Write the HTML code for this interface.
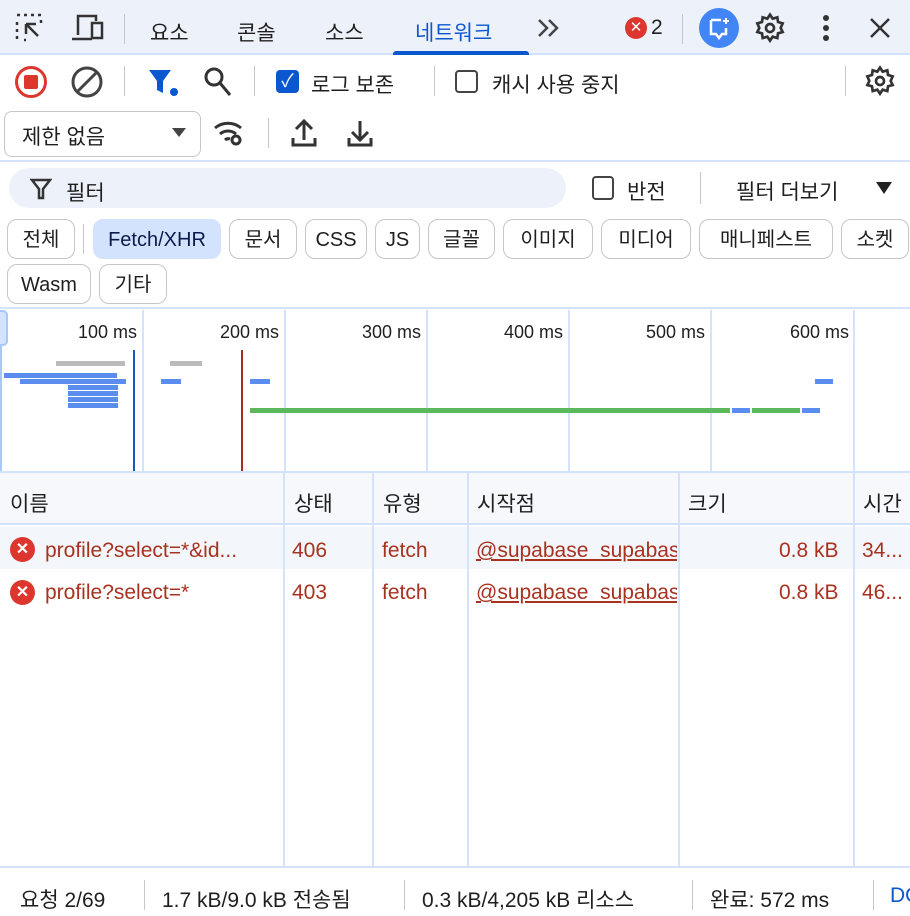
<!DOCTYPE html>
<html><head><meta charset="utf-8"><style>
*{margin:0;padding:0;box-sizing:border-box}
html,body{width:910px;height:916px;overflow:hidden}
body{background:#fff;font-family:"Liberation Sans","Noto Sans CJK KR",sans-serif;font-size:21px;color:#1f1f1f;position:relative}
.a{position:absolute;white-space:nowrap}
.vl{position:absolute;width:1px;background:#c4c7c5}
.chip{position:absolute;height:40px;border:1.5px solid #c4c7c5;border-radius:10px;line-height:40px;text-align:center;font-size:20px}
.cl{position:absolute;width:2px;background:#d3e3fd}
.bar{position:absolute;height:5px}
.red{color:#a8321f}
.ms{position:absolute;font-size:18px;top:322px;text-align:right;width:100px}
</style></head><body>
<div class="a" style="left:0;top:0;width:910px;height:55px;background:#edf2fa;border-bottom:2px solid #d3e3fd"></div>
<svg class="a" style="left:14px;top:12px" width="34" height="32" viewBox="0 0 34 32" fill="none" stroke="#333" stroke-width="2.5"><path d="M3 3h3M10 3h3M17 3h3M24 3h3M3 10v3M3 17v3M3 24v3M10 28h2M27 8v3"/><path d="M12 12l12 12M12 12v10M12 12h10"/></svg>
<svg class="a" style="left:70px;top:13px" width="36" height="30" viewBox="0 0 36 30" fill="none" stroke="#333" stroke-width="2.5"><path d="M8 22V3h18v5"/><path d="M2 26h20"/><rect x="22" y="10" width="10" height="15"/></svg>
<div class="vl" style="left:124px;top:14px;height:30px"></div>
<div class="a" style="left:150px;top:17px">요소</div>
<div class="a" style="left:237px;top:17px">콘솔</div>
<div class="a" style="left:325px;top:17px">소스</div>
<div class="a" style="left:415px;top:17px;color:#0b57d0">네트워크</div>
<div class="a" style="left:393px;top:51px;width:136px;height:4px;background:#0b57d0;border-radius:3px 3px 0 0"></div>
<svg class="a" style="left:536px;top:18px" width="26" height="20" viewBox="0 0 26 20" fill="none" stroke="#444" stroke-width="2.5"><path d="M3 2l8 8-8 8M13 2l8 8-8 8"/></svg>
<div class="a" style="left:625px;top:17px;width:22px;height:22px;border-radius:50%;background:#dc362e;color:#fff;font-size:15px;line-height:22px;text-align:center">✕</div>
<div class="a" style="left:651px;top:16px">2</div>
<div class="vl" style="left:682px;top:14px;height:30px"></div>
<div class="a" style="left:699px;top:8px;width:40px;height:40px;border-radius:50%;background:#4285f4"></div>
<svg class="a" style="left:707px;top:16px" width="24" height="26" viewBox="0 0 24 26" fill="none" stroke="#fff" stroke-width="2.5"><path d="M4 4h10M4 4v14h5l3 4 3-4h4V12"/><path d="M19 2v6M16 5h6" stroke-width="2"/></svg>
<svg class="a" style="left:754px;top:12px" width="32" height="32" viewBox="0 0 24 24" fill="none" stroke="#333" stroke-width="2"><circle cx="12" cy="12" r="3"/><path d="M12 2l2 3 3.5-1 .5 3.5 3.5 1-1.5 3.5 1.5 3-3.5 1-.5 3.5-3.5-1-2 3-2-3-3.5 1-.5-3.5-3.5-1L4 12 2.5 8.5 6 7.5 6.5 4 10 5z"/></svg>
<svg class="a" style="left:820px;top:14px" width="12" height="28" viewBox="0 0 12 28" fill="#333"><circle cx="6" cy="4" r="3"/><circle cx="6" cy="14" r="3"/><circle cx="6" cy="24" r="3"/></svg>
<svg class="a" style="left:869px;top:17px" width="22" height="22" viewBox="0 0 22 22" stroke="#333" stroke-width="2.5"><path d="M2 2l18 18M20 2L2 20"/></svg>
<div class="a" style="left:15px;top:66px;width:32px;height:32px;border:3px solid #dc362e;border-radius:50%"></div>
<div class="a" style="left:24px;top:75px;width:14px;height:14px;background:#dc362e;border-radius:2px"></div>
<svg class="a" style="left:70px;top:65px" width="34" height="34" viewBox="0 0 34 34" fill="none" stroke="#444" stroke-width="3"><circle cx="17" cy="17" r="14"/><path d="M27 7L7 27"/></svg>
<div class="vl" style="left:124px;top:66px;height:30px"></div>
<svg class="a" style="left:147px;top:67px" width="34" height="32" viewBox="0 0 34 32"><path d="M2 3h22L16 14v12l-6 -3V14z" fill="#0b57d0"/><circle cx="27" cy="25" r="4" fill="#0b57d0"/></svg>
<svg class="a" style="left:203px;top:66px" width="30" height="32" viewBox="0 0 30 32" fill="none" stroke="#333" stroke-width="3"><circle cx="11" cy="11" r="8"/><path d="M17 17l10 12"/></svg>
<div class="vl" style="left:254px;top:66px;height:30px"></div>
<div class="a" style="left:276px;top:70px;width:23px;height:23px;border-radius:4px;background:#0b57d0;color:#fff;font-size:18px;line-height:23px;text-align:center">✓</div>
<div class="a" style="left:311px;top:69px">로그 보존</div>
<div class="vl" style="left:434px;top:66px;height:30px"></div>
<div class="a" style="left:455px;top:70px;width:23px;height:23px;border-radius:4px;border:2px solid #444"></div>
<div class="a" style="left:492px;top:69px">캐시 사용 중지</div>
<div class="vl" style="left:845px;top:66px;height:30px"></div>
<svg class="a" style="left:864px;top:65px" width="32" height="32" viewBox="0 0 24 24" fill="none" stroke="#333" stroke-width="2"><circle cx="12" cy="12" r="3"/><path d="M12 2l2 3 3.5-1 .5 3.5 3.5 1-1.5 3.5 1.5 3-3.5 1-.5 3.5-3.5-1-2 3-2-3-3.5 1-.5-3.5-3.5-1L4 12 2.5 8.5 6 7.5 6.5 4 10 5z"/></svg>
<div class="a" style="left:4px;top:111px;width:197px;height:46px;border:1.5px solid #c4c7c5;border-radius:8px"></div>
<div class="a" style="left:22px;top:121px">제한 없음</div>
<div class="a" style="left:172px;top:128px;border-left:7px solid transparent;border-right:7px solid transparent;border-top:9px solid #444"></div>
<svg class="a" style="left:212px;top:118px" width="36" height="30" viewBox="0 0 36 30" fill="none" stroke="#333" stroke-width="3"><path d="M3 10a20 20 0 0 1 26 0M8 16a12 12 0 0 1 16 0M13 22a5 5 0 0 1 5-1"/><circle cx="24" cy="22" r="4"/></svg>
<div class="vl" style="left:268px;top:118px;height:30px"></div>
<svg class="a" style="left:290px;top:118px" width="28" height="30" viewBox="0 0 28 30" fill="none" stroke="#333" stroke-width="3"><path d="M14 22V4M6 11l8-8 8 8M3 20v7h22v-7"/></svg>
<svg class="a" style="left:346px;top:118px" width="28" height="30" viewBox="0 0 28 30" fill="none" stroke="#333" stroke-width="3"><path d="M14 3v19M6 14l8 8 8-8M3 20v7h22v-7"/></svg>
<div class="a" style="left:0;top:160px;width:910px;height:2px;background:#d3e3fd"></div>
<div class="a" style="left:9px;top:168px;width:557px;height:40px;border-radius:20px;background:#edf2fa"></div>
<svg class="a" style="left:30px;top:178px" width="22" height="22" viewBox="0 0 22 22" fill="none" stroke="#333" stroke-width="2.5"><path d="M2 2h18l-7 9v9h-4v-9z"/></svg>
<div class="a" style="left:66px;top:177px">필터</div>
<div class="a" style="left:592px;top:176px;width:22px;height:24px;border:2px solid #444;border-radius:4px"></div>
<div class="a" style="left:627px;top:176px">반전</div>
<div class="vl" style="left:700px;top:172px;height:32px"></div>
<div class="a" style="left:736px;top:176px">필터 더보기</div>
<div class="a" style="left:876px;top:182px;border-left:8px solid transparent;border-right:8px solid transparent;border-top:12px solid #222"></div>
<div class="chip" style="left:7px;top:219px;width:68px">전체</div>
<div class="vl" style="left:83px;top:224px;height:30px"></div>
<div class="chip" style="left:93px;top:219px;width:128px;background:#d3e3fd;border-color:#d3e3fd;color:#0a1c4e">Fetch/XHR</div>
<div class="chip" style="left:229px;top:219px;width:68px">문서</div>
<div class="chip" style="left:305px;top:219px;width:62px">CSS</div>
<div class="chip" style="left:375px;top:219px;width:45px">JS</div>
<div class="chip" style="left:428px;top:219px;width:67px">글꼴</div>
<div class="chip" style="left:503px;top:219px;width:90px">이미지</div>
<div class="chip" style="left:601px;top:219px;width:90px">미디어</div>
<div class="chip" style="left:699px;top:219px;width:134px">매니페스트</div>
<div class="chip" style="left:841px;top:219px;width:68px">소켓</div>
<div class="chip" style="left:7px;top:264px;width:84px">Wasm</div>
<div class="chip" style="left:99px;top:264px;width:68px">기타</div>
<div class="a" style="left:0;top:307px;width:910px;height:2px;background:#d3e3fd"></div>
<div class="cl" style="left:142px;top:310px;height:162px"></div>
<div class="cl" style="left:284px;top:310px;height:162px"></div>
<div class="cl" style="left:426px;top:310px;height:162px"></div>
<div class="cl" style="left:568px;top:310px;height:162px"></div>
<div class="cl" style="left:710px;top:310px;height:162px"></div>
<div class="cl" style="left:853px;top:310px;height:162px"></div>
<div class="a" style="left:0;top:310px;width:8px;height:36px;border:2px solid #a8c7fa;border-left:none;border-radius:0 5px 5px 0;background:#d3e3fd"></div>
<div class="a" style="left:0;top:346px;width:2px;height:126px;background:#a8c7fa"></div>
<div class="ms" style="left:37px">100 ms</div>
<div class="ms" style="left:179px">200 ms</div>
<div class="ms" style="left:321px">300 ms</div>
<div class="ms" style="left:463px">400 ms</div>
<div class="ms" style="left:605px">500 ms</div>
<div class="ms" style="left:749px">600 ms</div>
<div class="a" style="left:133px;top:350px;width:2px;height:122px;background:#1a56c4"></div>
<div class="a" style="left:241px;top:350px;width:2px;height:122px;background:#a3301f"></div>
<div class="bar" style="left:56px;top:361px;width:69px;background:#bbb"></div>
<div class="bar" style="left:170px;top:361px;width:32px;background:#bbb"></div>
<div class="bar" style="left:4px;top:373px;width:113px;background:#5b8def"></div>
<div class="bar" style="left:20px;top:379px;width:106px;background:#5b8def"></div>
<div class="bar" style="left:68px;top:385px;width:50px;background:#5b8def"></div>
<div class="bar" style="left:68px;top:391px;width:50px;background:#5b8def"></div>
<div class="bar" style="left:68px;top:397px;width:50px;background:#5b8def"></div>
<div class="bar" style="left:68px;top:403px;width:50px;background:#5b8def"></div>
<div class="bar" style="left:161px;top:379px;width:20px;background:#5b8def"></div>
<div class="bar" style="left:250px;top:379px;width:20px;background:#5b8def"></div>
<div class="bar" style="left:815px;top:379px;width:18px;background:#5b8def"></div>
<div class="bar" style="left:250px;top:408px;width:480px;background:#5cb85c"></div>
<div class="bar" style="left:732px;top:408px;width:18px;background:#5b8def"></div>
<div class="bar" style="left:752px;top:408px;width:48px;background:#5cb85c"></div>
<div class="bar" style="left:802px;top:408px;width:18px;background:#5b8def"></div>
<div class="a" style="left:0;top:471px;width:910px;height:2px;background:#d3e3fd"></div>
<div class="a" style="left:0;top:473px;width:910px;height:52px;background:#f6f8fc;border-bottom:2px solid #d3e3fd"></div>
<div class="a" style="left:0;top:527px;width:910px;height:42px;background:#f3f6fb"></div>
<div class="cl" style="left:283px;top:473px;height:394px"></div>
<div class="cl" style="left:372px;top:473px;height:394px"></div>
<div class="cl" style="left:467px;top:473px;height:394px"></div>
<div class="cl" style="left:678px;top:473px;height:394px"></div>
<div class="cl" style="left:853px;top:473px;height:394px"></div>
<div class="a" style="left:10px;top:488px">이름</div>
<div class="a" style="left:294px;top:488px">상태</div>
<div class="a" style="left:383px;top:488px">유형</div>
<div class="a" style="left:477px;top:488px">시작점</div>
<div class="a" style="left:688px;top:488px">크기</div>
<div class="a" style="left:863px;top:488px">시간</div>
<div class="a" style="left:10px;top:537px;width:25px;height:25px;border-radius:50%;background:#dc362e;color:#fff;font-size:16px;line-height:25px;text-align:center;font-weight:bold">✕</div>
<div class="a red" style="left:45px;top:539px">profile?select=*&amp;id...</div>
<div class="a red" style="left:292px;top:539px">406</div>
<div class="a red" style="left:382px;top:539px">fetch</div>
<div class="a red" style="left:476px;top:539px;width:201px;overflow:hidden;text-decoration:underline">@supabase_supabase</div>
<div class="a red" style="left:779px;top:539px">0.8 kB</div>
<div class="a red" style="left:862px;top:539px">34...</div>
<div class="a" style="left:10px;top:580px;width:25px;height:25px;border-radius:50%;background:#dc362e;color:#fff;font-size:16px;line-height:25px;text-align:center;font-weight:bold">✕</div>
<div class="a red" style="left:45px;top:581px">profile?select=*</div>
<div class="a red" style="left:292px;top:581px">403</div>
<div class="a red" style="left:382px;top:581px">fetch</div>
<div class="a red" style="left:476px;top:581px;width:201px;overflow:hidden;text-decoration:underline">@supabase_supabase</div>
<div class="a red" style="left:779px;top:581px">0.8 kB</div>
<div class="a red" style="left:862px;top:581px">46...</div>
<div class="a" style="left:0;top:866px;width:910px;height:2px;background:#d3e3fd"></div>
<div class="a" style="left:20px;top:884px">요청 2/69</div>
<div class="vl" style="left:144px;top:880px;height:30px"></div>
<div class="a" style="left:162px;top:884px">1.7 kB/9.0 kB 전송됨</div>
<div class="vl" style="left:404px;top:880px;height:30px"></div>
<div class="a" style="left:422px;top:884px">0.3 kB/4,205 kB 리소스</div>
<div class="vl" style="left:692px;top:880px;height:30px"></div>
<div class="a" style="left:710px;top:884px">완료: 572 ms</div>
<div class="vl" style="left:873px;top:880px;height:30px"></div>
<div class="a" style="left:890px;top:884px;width:20px;overflow:hidden;color:#0b57d0">DOMContentLoaded</div>
</body></html>
